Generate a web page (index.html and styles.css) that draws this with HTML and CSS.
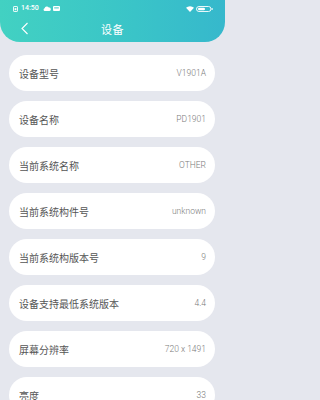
FILE: index.html
```html
<!DOCTYPE html>
<html lang="zh">
<head>
<meta charset="utf-8">
<link rel="stylesheet" href="styles.css">
</head>
<body>
<div class="page">
  <header class="header">
    <div class="status">
      <div class="status-left">
        <svg class="sim" width="5" height="6" viewBox="0 0 5 6"><rect x="0.5" y="0.5" width="4" height="5" rx="0.6" fill="none" stroke="#fff" stroke-width="0.9"/><rect x="1.6" y="2.2" width="1.8" height="2" fill="#fff"/></svg>
        <span class="time">14:50</span>
        <svg width="8" height="5" viewBox="0 0 8 5"><path d="M1.5 5 A1.5 1.5 0 0 1 1.6 2.2 A2.3 2.3 0 0 1 5.8 1.6 A1.7 1.7 0 0 1 6.4 5 Z" fill="#fff"/></svg>
        <svg width="7" height="5" viewBox="0 0 7 5"><rect x="0" y="0" width="7" height="5" rx="1" fill="#fff"/><rect x="1.2" y="1.4" width="4.6" height="1" fill="#3cc8c4"/></svg>
      </div>
      <div class="status-right">
        <svg width="8" height="6" viewBox="0 0 8 6"><path d="M4 6 L0 1.8 A6 6 0 0 1 8 1.8 Z" fill="#fff"/></svg>
        <svg width="17" height="6" viewBox="0 0 17 6"><rect x="0.5" y="0.5" width="14.5" height="5" rx="2.5" fill="none" stroke="#fff" stroke-width="0.9"/><rect x="2" y="1.8" width="7" height="2.4" rx="1.2" fill="#fff"/><rect x="15.6" y="2" width="1" height="2" fill="#fff"/></svg>
      </div>
    </div>
    <div class="nav">
      <svg class="back" width="9" height="13" viewBox="0 0 9 13"><path d="M7.5 1 L2 6.5 L7.5 12" fill="none" stroke="#fff" stroke-width="1.1"/></svg>
      <span class="title">设备</span>
    </div>
  </header>
  <main class="list">
    <div class="row"><span class="label">设备型号</span><span class="value">V1901A</span></div>
    <div class="row"><span class="label">设备名称</span><span class="value">PD1901</span></div>
    <div class="row"><span class="label">当前系统名称</span><span class="value">OTHER</span></div>
    <div class="row"><span class="label">当前系统构件号</span><span class="value">unknown</span></div>
    <div class="row"><span class="label">当前系统构版本号</span><span class="value">9</span></div>
    <div class="row"><span class="label">设备支持最低系统版本</span><span class="value">4.4</span></div>
    <div class="row"><span class="label">屏幕分辨率</span><span class="value">720 x 1491</span></div>
    <div class="row"><span class="label">亮度</span><span class="value">33</span></div>
  </main>
</div>
</body>
</html>
```
FILE: styles.css
```css
* { box-sizing: border-box; }
html, body { margin: 0; padding: 0; }
body {
  width: 225px;
  height: 400px;
  overflow: hidden;
  background: #e5e7ee;
  font-family: "Noto Sans CJK SC", "Noto Sans", sans-serif;
}
.page { display: flex; flex-direction: column; }
.header {
  height: 42px;
  background: linear-gradient(90deg, #42d1c2 0%, #3ac4c8 60%, #36b8cc 100%);
  border-radius: 0 0 20px 20px;
  color: #fff;
  display: flex;
  flex-direction: column;
}
.status {
  height: 14px;
  padding: 3px 12px 0 13px;
  display: flex;
  justify-content: space-between;
  align-items: center;
}
.status-left, .status-right { display: flex; align-items: center; gap: 2px; }
.time {
  font-family: "Roboto", "Noto Sans", sans-serif;
  font-size: 7px;
  font-weight: 500;
  line-height: 7px;
  margin: 0 2px 0 1px;
}
.nav {
  position: relative;
  height: 28px;
  display: flex;
  align-items: center;
  justify-content: center;
}
.back { position: absolute; left: 20px; top: 8px; }
.title { font-size: 11px; line-height: 11px; margin-top: 2px; letter-spacing: 0.5px; }
.list {
  padding: 13px 10px 0 9px;
  display: flex;
  flex-direction: column;
  gap: 10px;
}
.row {
  height: 36px;
  flex: none;
  background: #fff;
  border-radius: 18px;
  display: flex;
  align-items: center;
  justify-content: space-between;
  padding: 0 9px 0 10px;
}
.label { font-size: 10px; color: #555; }
.value { font-family: "Roboto", "Noto Sans", sans-serif; font-size: 8.5px; font-weight: 300; color: #7a7a7a; }
```
